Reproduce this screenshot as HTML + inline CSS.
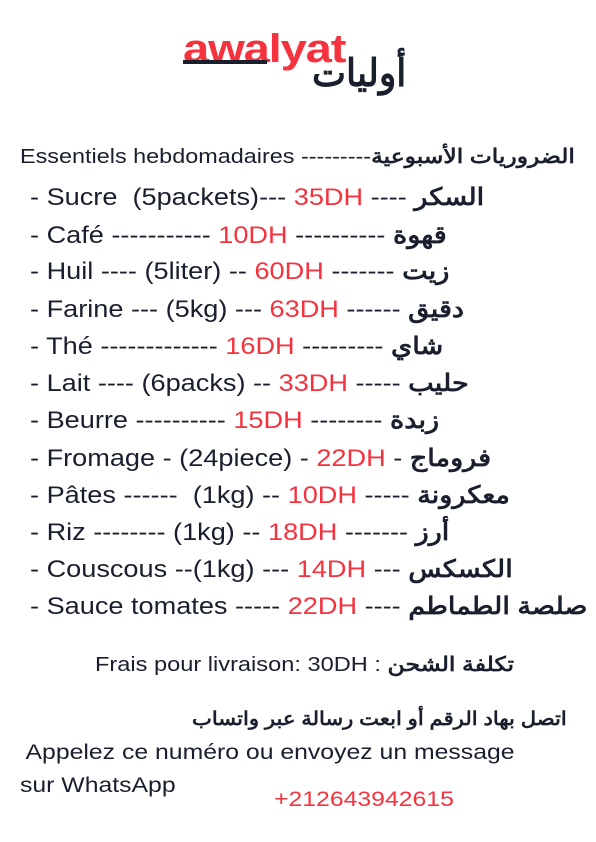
<!DOCTYPE html>
<html><head><meta charset="utf-8"><style>
body{margin:0;width:596px;height:842px;background:#fff;position:relative;overflow:hidden;font-family:"Liberation Sans","Noto Sans CJK SC",sans-serif;color:#1a1f2e}
.l{position:absolute;white-space:pre;line-height:1;transform-origin:0 0;transform:scaleX(1.18)}
.i{font-size:24px;left:30px;transform:scaleX(1.13)}
.r{color:#f5333f}
.a{font-weight:bold}
</style></head><body>
<div class="l" style="left:183px;top:29px;font-size:40px;font-weight:bold;color:#f5333f;letter-spacing:-1px">awalyat</div>
<div style="position:absolute;left:183px;top:60px;width:84px;height:4px;background:#1a1f2e"></div>
<div class="l" style="left:312px;top:55px;font-size:38px;font-weight:bold;color:#1a1f2e;transform:scaleX(0.95)">أوليات</div>
<div class="l" style="left:20px;top:147px;font-size:20px;transform:scaleX(1.17)">Essentiels hebdomadaires ---------<span class="a">الضروريات الأسبوعية</span></div>
<div class="l i" style="top:186px">- Sucre  (5packets)--- <span class="r">35DH</span> ---- <span class="a">السكر</span></div>
<div class="l i" style="top:224px">- Café ----------- <span class="r">10DH</span> ---------- <span class="a">قهوة</span></div>
<div class="l i" style="top:260px">- Huil ---- (5liter) -- <span class="r">60DH</span> ------- <span class="a">زيت</span></div>
<div class="l i" style="top:298px">- Farine --- (5kg) --- <span class="r">63DH</span> ------ <span class="a">دقيق</span></div>
<div class="l i" style="top:335px">- Thé ------------- <span class="r">16DH</span> --------- <span class="a">شاي</span></div>
<div class="l i" style="top:372px">- Lait ---- (6packs) -- <span class="r">33DH</span> ----- <span class="a">حليب</span></div>
<div class="l i" style="top:409px">- Beurre ---------- <span class="r">15DH</span> -------- <span class="a">زبدة</span></div>
<div class="l i" style="top:447px">- Fromage - (24piece) - <span class="r">22DH</span> - <span class="a">فروماج</span></div>
<div class="l i" style="top:484px">- Pâtes ------  (1kg) -- <span class="r">10DH</span> ----- <span class="a">معكرونة</span></div>
<div class="l i" style="top:521px">- Riz -------- (1kg) -- <span class="r">18DH</span> ------- <span class="a">أرز</span></div>
<div class="l i" style="top:558px">- Couscous --(1kg) --- <span class="r">14DH</span> --- <span class="a">الكسكس</span></div>
<div class="l i" style="top:595px">- Sauce tomates ----- <span class="r">22DH</span> ---- <span class="a">صلصة الطماطم</span></div>
<div class="l" style="left:95px;top:655px;font-size:20px;transform:scaleX(1.18)">Frais pour livraison: 30DH : <span class="a">تكلفة الشحن</span></div>
<div class="l" style="left:192px;top:710px;font-size:19px;font-weight:bold;transform:scaleX(1.11)">اتصل بهاد الرقم أو ابعت رسالة عبر واتساب</div>
<div class="l" style="left:20px;top:742px;font-size:21px"> Appelez ce numéro ou envoyez un message</div>
<div class="l" style="left:20px;top:775px;font-size:21px">sur WhatsApp</div>
<div class="l r" style="left:274px;top:789px;font-size:21px">+212643942615</div>
</body></html>
